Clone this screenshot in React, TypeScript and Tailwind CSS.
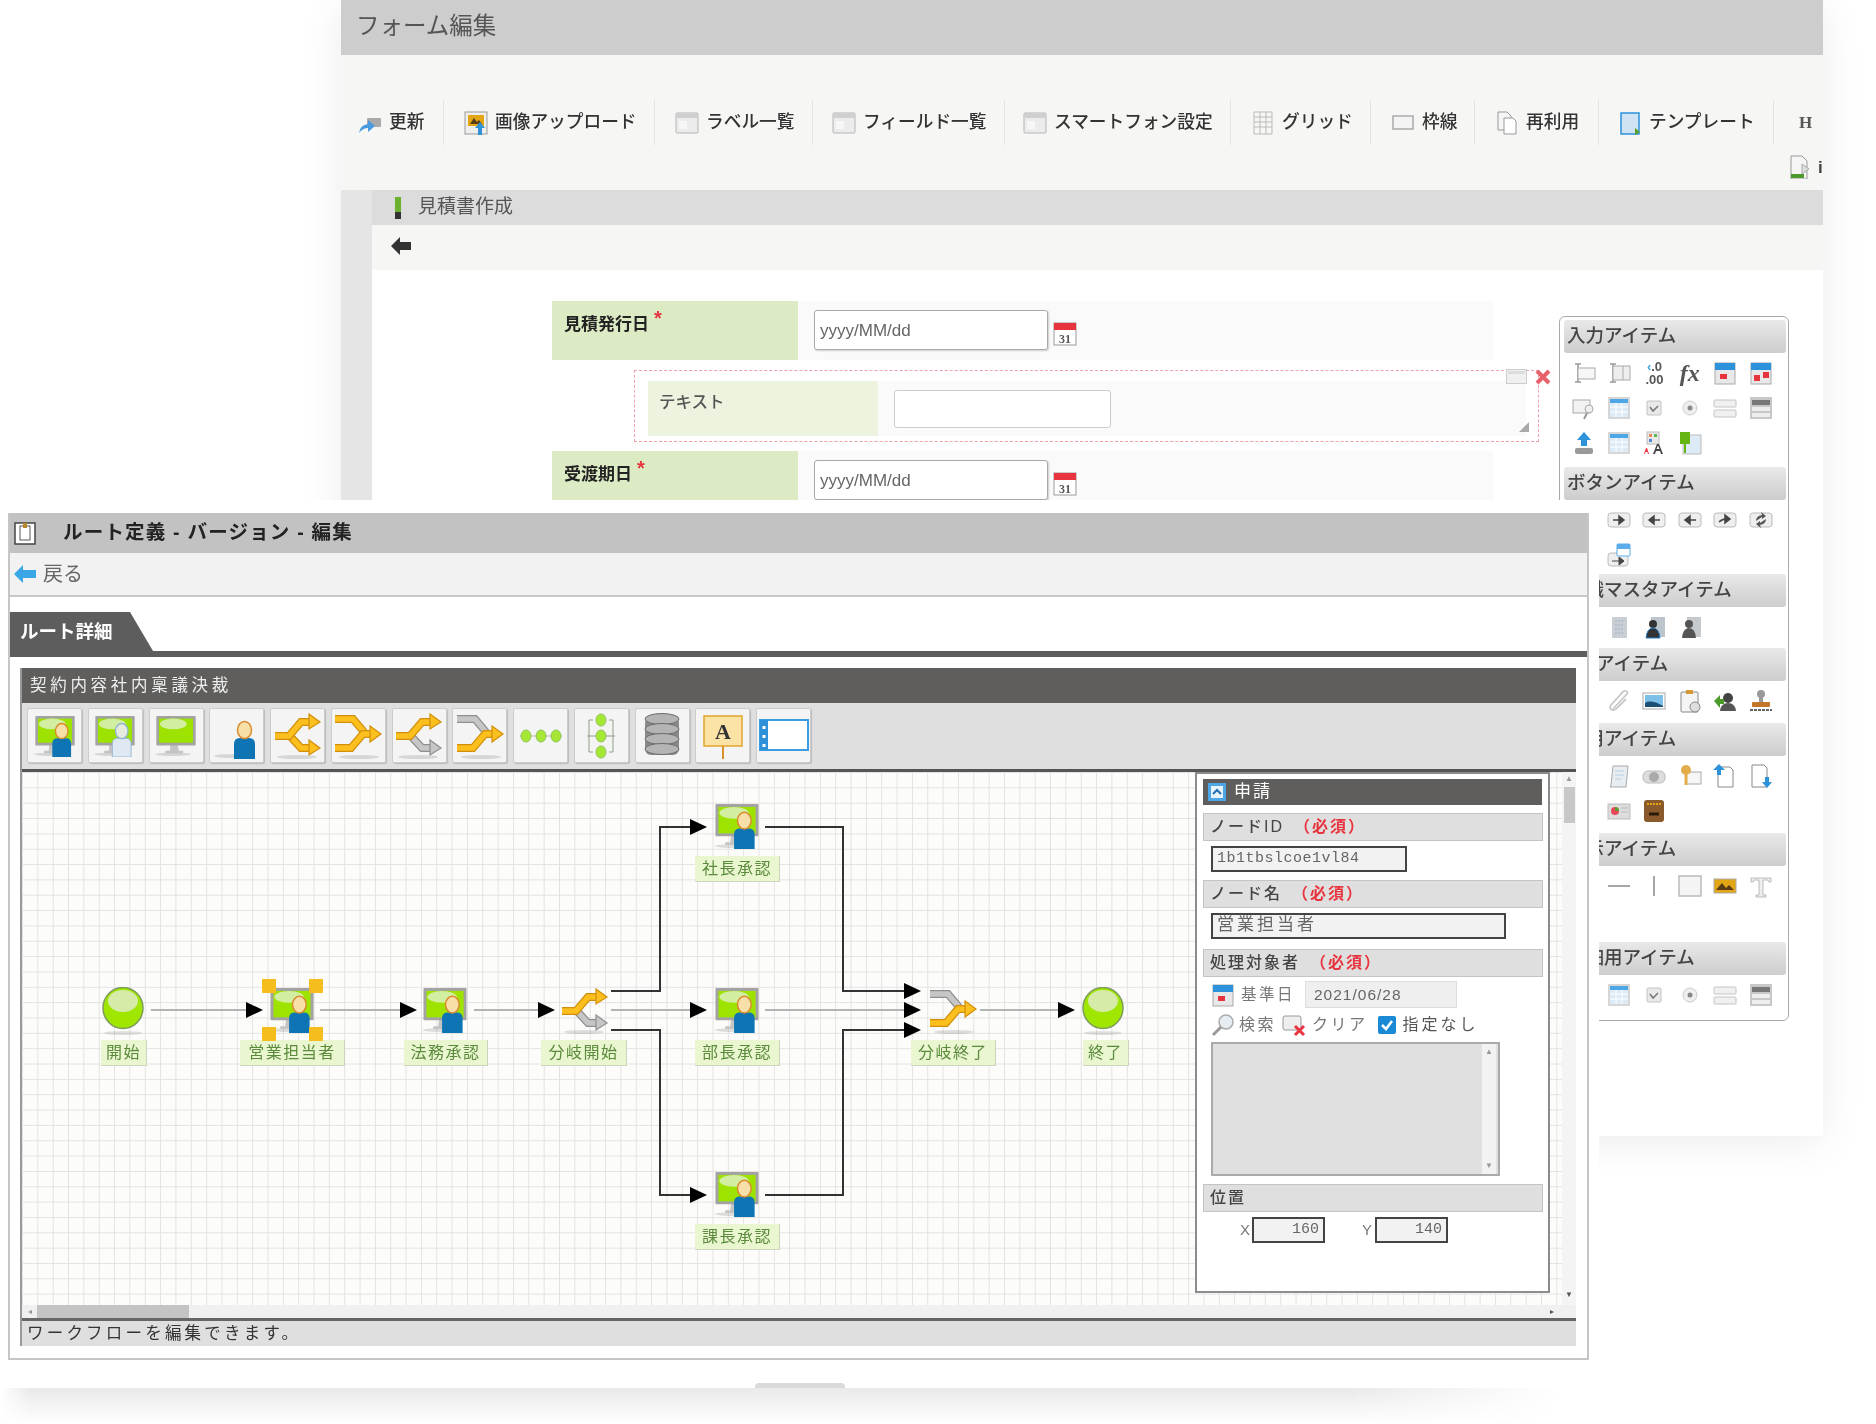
const Shadow = ({ cx, cy, rx }: { cx: number; cy: number; rx: number }) => (
  <ellipse cx={cx} cy={cy} rx={rx} ry="2" fill="#000" opacity="0.12" />
);

// monitor with optional person standing in front of it
function Monitor({ person = "blue", size = 46 }: { person?: "blue" | "ghost" | "none"; size?: number }) {
  return (
    <svg width={size} height={size} viewBox="0 0 46 47">
      <Shadow cx={20} cy={44} rx={20} />
      <path d="M17 32h8l1 8h5v3H11v-3h5z" fill="#c4c4c4" />
      <rect x="1" y="1" width="44" height="33" rx="1" fill="#a3a3a3" />
      <rect x="4" y="4" width="38" height="27" fill="#9ee300" />
      <ellipse cx="20" cy="10" rx="15" ry="6" fill="#d2eea0" />
      {person === "blue" && (
        <>
          <path d="M20 32q0-6 6-6h9q6 0 6 6v15H20z" fill="#0f74b4" />
          <ellipse cx="30.5" cy="18" rx="7" ry="8.5" fill="#f6e0a8" stroke="#d98a2e" strokeWidth="1.5" />
        </>
      )}
      {person === "ghost" && (
        <>
          <path d="M20 32q0-6 6-6h9q6 0 6 6v15H20z" fill="#dfe9f3" stroke="#8fb2d0" />
          <ellipse cx="30.5" cy="18" rx="7" ry="8.5" fill="#e6ecdc" stroke="#8fb2d0" strokeWidth="1.5" />
        </>
      )}
    </svg>
  );
}

function PersonOnly() {
  return (
    <svg width="46" height="47" viewBox="0 0 46 47">
      <Shadow cx={20} cy={44} rx={20} />
      <path d="M20 32q0-6 6-6h9q6 0 6 6v15H20z" fill="#0f74b4" />
      <ellipse cx="30.5" cy="18" rx="7" ry="8.5" fill="#f6e0a8" stroke="#d98a2e" strokeWidth="1.5" />
    </svg>
  );
}

function Pipe({ d, color }: { d: string; color: "orange" | "gray" }) {
  const dark = color === "orange" ? "#d18f0c" : "#8f8f8f";
  const light = color === "orange" ? "#fbbf1e" : "#c6c6c6";
  return (
    <>
      <path d={d} fill="none" stroke={dark} strokeWidth="8" />
      <path d={d} fill="none" stroke={light} strokeWidth="5.5" />
    </>
  );
}

function Head({ points, color }: { points: string; color: "orange" | "gray" }) {
  return (
    <polygon
      points={points}
      fill={color === "orange" ? "#fbbf1e" : "#c6c6c6"}
      stroke={color === "orange" ? "#d18f0c" : "#8f8f8f"}
      strokeWidth="1.2"
    />
  );
}

function Split({ top = "orange", bottom = "gray" }: { top?: "orange" | "gray"; bottom?: "orange" | "gray" }) {
  return (
    <svg width="50" height="47" viewBox="0 0 50 47">
      <Shadow cx={24} cy={45} rx={20} />
      <Pipe d="M16 23L28 36H37" color={bottom} />
      <Head points="36,28 47,36 36,43" color={bottom} />
      <Pipe d="M2 24H16L28 10H37" color={top} />
      <Head points="36,2 47,10 36,17" color={top} />
    </svg>
  );
}

function Merge({ top = "gray", bottom = "orange", bothHeads = false }: { top?: "orange" | "gray"; bottom?: "orange" | "gray"; bothHeads?: boolean }) {
  return (
    <svg width="50" height="47" viewBox="0 0 50 47">
      <Shadow cx={26} cy={45} rx={20} />
      <Pipe d="M2 7H20L31 20" color={top} />
      <Pipe d="M2 36H18L30 22H38" color={bottom} />
      <Head points="37,14 48,22 37,30" color={bothHeads ? top : bottom} />
    </svg>
  );
}

function Ball({ size = 42 }: { size?: number }) {
  return (
    <svg width={size} height={size + 6} viewBox="0 0 42 48">
      <ellipse cx="21" cy="46" rx="19" ry="2" fill="#000" opacity="0.1" />
      <ellipse cx="21" cy="21" rx="20" ry="20.5" fill="#9fe600" stroke="#7f9a5e" strokeWidth="1.5" />
      <ellipse cx="21" cy="14" rx="15" ry="11" fill="#d6eba8" />
    </svg>
  );
}

const toolbarIcons = [
  <Monitor key="a" size={42} />,
  <Monitor key="b" size={42} person="ghost" />,
  <Monitor key="c" size={42} person="none" />,
  <PersonOnly key="d" />,
  <Split key="e" top="orange" bottom="orange" />,
  <Merge key="f" top="orange" bottom="orange" bothHeads />,
  <Split key="g" />,
  <Merge key="h" />,
  <svg key="i" width="46" height="40" viewBox="0 0 46 40">
    <path d="M2 20H44" stroke="#bbb" />
    {[8, 23, 38].map((x) => (
      <ellipse key={x} cx={x} cy="20" rx="5" ry="6" fill="#a6e635" stroke="#8fc45a" />
    ))}
  </svg>,
  <svg key="j" width="30" height="48" viewBox="0 0 30 48">
    <path d="M7 8H3V40H7M23 8H27V40H23M1 24H29" fill="none" stroke="#8fa08a" />
    {[8, 24, 40].map((y) => (
      <ellipse key={y} cx="15" cy={y} rx="5" ry="6" fill="#a6e635" stroke="#8fc45a" />
    ))}
  </svg>,
  <svg key="k" width="38" height="48" viewBox="0 0 38 48">
    <rect x="2" y="5" width="34" height="38" rx="6" fill="#8a8a8a" />
    {[7, 17, 27, 37].map((y) => (
      <ellipse key={y} cx="19" cy={y} rx="17" ry="5.5" fill="#b4b4b4" stroke="#6c6c6c" />
    ))}
  </svg>,
  <svg key="l" width="42" height="48" viewBox="0 0 42 48">
    <rect x="2" y="4" width="38" height="30" fill="#fbe3a6" stroke="#e1a42f" strokeWidth="1.5" />
    <path d="M21 34v13" stroke="#d9922a" strokeWidth="2" />
    <text x="21" y="27" textAnchor="middle" fontSize="22" fontWeight="700" fontFamily="Liberation Serif" fill="#333">A</text>
  </svg>,
  <svg key="m" width="50" height="36" viewBox="0 0 50 36">
    <rect x="1" y="2" width="48" height="30" fill="#fff" stroke="#3d9ce0" strokeWidth="2" />
    <rect x="1" y="2" width="8" height="30" fill="#2f8fd8" />
    {[8, 17, 26].map((y) => (
      <rect key={y} x="3.5" y={y} width="3" height="3" fill="#fff" />
    ))}
  </svg>,
];

const stroke = { fill: "none", stroke: "#999", strokeWidth: 1.5 };

// small icons of the toolbar and the item palette, all on a 24 grid
function Glyph({ name }: { name: string }) {
  const content: Record<string, React.ReactNode> = {
    update: (
      <>
        <rect x="9" y="7" width="14" height="9" rx="1" fill="#aaa" />
        <path d="M1 22q1-8 9-9V9l7 6-7 6v-4q-5 0-9 5z" fill="#4a9ae0" />
      </>
    ),
    upload: (
      <>
        <rect x="1" y="1" width="22" height="22" fill="#eee" stroke="#999" />
        <rect x="4" y="4" width="16" height="11" fill="#e2a515" />
        <path d="M6 13l4-6 3 4 2-2 3 4z" fill="#5a3b14" />
        <path d="M16 11l5 6h-3v7h-4v-7h-3z" fill="#2e92d9" />
      </>
    ),
    sheet: (
      <>
        <rect x="1" y="2" width="22" height="20" rx="1" fill="#ececec" stroke="#b4b4b4" />
        <rect x="2" y="3" width="20" height="4" fill="#cfcfcf" />
        <rect x="4" y="10" width="8" height="8" fill="#f7f7f7" />
      </>
    ),
    grid: <path d="M3 1h18v22H3zM3 6h18M3 11h18M3 16h18M9 1v22M15 1v22" {...stroke} strokeWidth={1} stroke="#bbb" />,
    frame: <rect x="2" y="5" width="20" height="13" fill="#f4f4f4" stroke="#aaa" strokeWidth="1.5" />,
    reuse: (
      <>
        <path d="M3 1h9l4 4v14H3z" fill="#f5f5f5" stroke="#999" />
        <path d="M9 7h9l3 3v13H9z" fill="#fff" stroke="#999" />
      </>
    ),
    template: (
      <>
        <rect x="3" y="2" width="18" height="21" fill="#cfe3f3" stroke="#2d92dc" strokeWidth="1.5" />
        <path d="M17 17l5 4-5 3z" fill="#5aa02c" />
      </>
    ),
    export: (
      <>
        <path d="M3 1h11l5 5v18H3z" fill="#f5f5f5" stroke="#999" />
        <rect x="3" y="19" width="13" height="4" fill="#4d9a2a" />
        <path d="M14 9l7 5-7 5z" fill="#ddd" stroke="#aaa" />
      </>
    ),
    labelField: (
      <>
        <path d="M6 3v18M3 3h6M3 21h6" {...stroke} />
        <rect x="6" y="7" width="17" height="11" fill="#f6f6f6" stroke="#aaa" />
      </>
    ),
    labelField2: (
      <>
        <path d="M6 3v18M3 3h6M3 21h6" {...stroke} />
        <rect x="6" y="5" width="17" height="14" fill="#eee" stroke="#aaa" />
        <path d="M16 5v14" stroke="#aaa" />
      </>
    ),
    calendar: (
      <>
        <rect x="2" y="2" width="20" height="21" fill="#e8e8e8" stroke="#aaa" />
        <rect x="2" y="2" width="20" height="7" fill="#2d92dc" />
        <rect x="7" y="13" width="7" height="5" fill="#e8343e" />
      </>
    ),
    calendar2: (
      <>
        <rect x="2" y="2" width="20" height="21" fill="#e8e8e8" stroke="#aaa" />
        <rect x="2" y="2" width="20" height="7" fill="#2d92dc" />
        <rect x="5" y="14" width="6" height="6" fill="#e8343e" />
        <rect x="14" y="11" width="6" height="6" fill="#e8343e" />
      </>
    ),
    lookup: (
      <>
        <rect x="1" y="4" width="17" height="13" fill="#f2f2f2" stroke="#aaa" />
        <circle cx="17" cy="13" r="4" fill="#eee" stroke="#aaa" />
        <path d="M15 17l-3 6" stroke="#999" strokeWidth="2" />
      </>
    ),
    table: (
      <>
        <rect x="1" y="1" width="22" height="22" fill="#d6d6d6" />
        <rect x="3" y="3" width="18" height="18" fill="#dcebf6" />
        <rect x="3" y="3" width="18" height="4" fill="#4da6e6" />
        <path d="M3 11h18M3 16h18M9 7v14M15 7v14" stroke="#fff" />
      </>
    ),
    check: (
      <>
        <rect x="5" y="5" width="14" height="14" rx="1" fill="#e9e9e9" stroke="#c4c4c4" />
        <path d="M8 11l3 4 5-5" fill="none" stroke="#777" strokeWidth="1.5" />
      </>
    ),
    radio: (
      <>
        <circle cx="12" cy="12" r="7" fill="#eee" stroke="#ccc" />
        <circle cx="12" cy="12" r="2.5" fill="#888" />
      </>
    ),
    list: (
      <>
        <rect x="1" y="4" width="22" height="7" rx="1" fill="#f0f0f0" stroke="#c4c4c4" />
        <rect x="1" y="14" width="22" height="7" rx="1" fill="#f0f0f0" stroke="#c4c4c4" />
      </>
    ),
    listbox: (
      <>
        <rect x="1" y="1" width="22" height="22" fill="#c8c8c8" />
        <rect x="3" y="4" width="18" height="5" fill="#777" />
        <rect x="3" y="11" width="18" height="4" fill="#eee" />
        <rect x="3" y="17" width="18" height="4" fill="#eee" />
      </>
    ),
    uploadItem: (
      <>
        <path d="M12 1l7 8h-4v6H9V9H5z" fill="#2e92d9" />
        <rect x="3" y="17" width="18" height="6" rx="2" fill="#999" />
      </>
    ),
    color: (
      <>
        <rect x="5" y="1" width="12" height="12" fill="#e9e9e9" stroke="#bbb" />
        <rect x="7" y="3" width="3" height="3" fill="#e85" />
        <rect x="12" y="3" width="3" height="3" fill="#5b5" />
        <rect x="7" y="8" width="3" height="3" fill="#58d" />
        <path d="M11 23l4-10h2l4 10h-2l-1-3h-4l-1 3zM14.5 18h3l-1.5-3.5z" fill="#444" />
        <path d="M2 23l2-6h1l2 6H6l-.5-2h-2L3 23z" fill="#e34" />
      </>
    ),
    tag: (
      <>
        <rect x="5" y="4" width="18" height="19" fill="#dcebf6" stroke="#bbb" />
        <rect x="2" y="1" width="10" height="12" fill="#66b512" />
        <path d="M7 13v9" stroke="#66b512" strokeWidth="2" />
      </>
    ),
    btnR: (
      <>
        <rect x="1" y="5" width="22" height="14" rx="3" fill="#eee" stroke="#bbb" />
        <path d="M6 12h7M12 8l5 4-5 4z" stroke="#444" fill="#444" strokeWidth="1.5" />
      </>
    ),
    btnL: (
      <>
        <rect x="1" y="5" width="22" height="14" rx="3" fill="#eee" stroke="#bbb" />
        <path d="M18 12h-7M12 8l-5 4 5 4z" stroke="#444" fill="#444" strokeWidth="1.5" />
      </>
    ),
    btnU: (
      <>
        <rect x="1" y="5" width="22" height="14" rx="3" fill="#eee" stroke="#bbb" />
        <path d="M6 14q3-3 7-3M12 7l5 4-5 4z" stroke="#444" fill="#444" strokeWidth="1.5" />
      </>
    ),
    btnC: (
      <>
        <rect x="1" y="5" width="22" height="14" rx="3" fill="#eee" stroke="#bbb" />
        <path d="M7 13q0-5 6-6l-1-3 5 4-4 3v-2M17 11q0 5-6 6l1 3-5-4 4-3v2" fill="#555" />
      </>
    ),
    btnW: (
      <>
        <rect x="1" y="10" width="20" height="13" rx="3" fill="#eee" stroke="#bbb" />
        <path d="M5 18h8M12 14l5 4-5 4z" stroke="#444" fill="#444" />
        <rect x="10" y="1" width="13" height="12" rx="1" fill="#fff" stroke="#5aade8" />
        <rect x="10" y="1" width="13" height="5" fill="#5aade8" />
      </>
    ),
    building: (
      <>
        <rect x="5" y="2" width="15" height="21" rx="1" fill="#c8ced3" />
        <path d="M8 6h9M8 10h9M8 14h9M8 18h9" stroke="#9fb3c4" strokeDasharray="2 1" />
      </>
    ),
    orgA: (
      <>
        <rect x="9" y="2" width="14" height="20" fill="#bcc5cc" />
        <circle cx="11" cy="9" r="4" fill="#333" />
        <path d="M4 23q1-10 7-10t7 10z" fill="#333" stroke="#2580c8" />
      </>
    ),
    orgB: (
      <>
        <rect x="9" y="2" width="14" height="20" fill="#c6cacd" />
        <circle cx="11" cy="9" r="4" fill="#555" />
        <path d="M4 23q1-10 7-10t7 10z" fill="#555" />
      </>
    ),
    clipper: (
      <path d="M6 20L19 6q3-3 0-4t-5 3L4 16q-2 4 1 5t6-3l8-8" fill="none" stroke="#c8c8c8" strokeWidth="1.8" />
    ),
    image: (
      <>
        <rect x="1" y="4" width="22" height="16" fill="#fff" stroke="#aaa" />
        <rect x="3" y="6" width="18" height="12" fill="#7cc0e8" />
        <path d="M3 14q6-4 18 3v1H3z" fill="#1c4f73" />
      </>
    ),
    clock: (
      <>
        <rect x="3" y="3" width="17" height="20" rx="1" fill="#f4f4f4" stroke="#888" />
        <rect x="8" y="1" width="7" height="4" fill="#d59a35" />
        <circle cx="17" cy="18" r="5" fill="#ddd" stroke="#888" />
      </>
    ),
    back: (
      <>
        <circle cx="15" cy="9" r="5" fill="#444" />
        <path d="M7 22q1-8 8-8t8 8z" fill="#555" />
        <path d="M1 12l6-6v4h4v5H7v4z" fill="#4c9a2a" />
      </>
    ),
    stamp: (
      <>
        <circle cx="12" cy="5" r="4" fill="#999" />
        <rect x="10" y="8" width="4" height="5" fill="#999" />
        <rect x="3" y="13" width="18" height="5" rx="1" fill="#c4772a" />
        <path d="M1 21h22" stroke="#666" strokeWidth="2" strokeDasharray="3 1" />
      </>
    ),
    doc: (
      <>
        <path d="M4 21L6 2h15l-2 21H3z" fill="#e8edf2" stroke="#aaa" />
        <path d="M8 7h9M8 11h9M8 15h6" stroke="#b8cfe2" />
      </>
    ),
    coin: (
      <>
        <rect x="1" y="7" width="22" height="12" rx="5" fill="#ddd" stroke="#bbb" />
        <circle cx="12" cy="13" r="5" fill="#aaa" />
      </>
    ),
    key: (
      <>
        <rect x="8" y="8" width="15" height="12" fill="#f6f6f6" stroke="#aaa" />
        <circle cx="8" cy="6" r="5" fill="#e3ad4c" />
        <path d="M8 10v11" stroke="#e3ad4c" strokeWidth="3" />
      </>
    ),
    docUp: (
      <>
        <path d="M5 3h12l3 3v17H5z" fill="#fff" stroke="#888" />
        <path d="M6 0l6 6H8v5H4V6H0z" fill="#2e92d9" />
      </>
    ),
    docDown: (
      <>
        <path d="M3 1h12l3 3v19H3z" fill="#fff" stroke="#888" />
        <path d="M18 24l-5-6h3v-5h4v5h3z" fill="#2e92d9" />
      </>
    ),
    chart: (
      <>
        <rect x="1" y="5" width="22" height="15" fill="#ddd" stroke="#bbb" />
        <circle cx="8" cy="12" r="4" fill="#e8455a" />
        <path d="M8 12V8a4 4 0 0 1 4 4z" fill="#5aa02c" />
        <path d="M14 9h7M14 13h7" stroke="#bbb" />
      </>
    ),
    box: (
      <>
        <rect x="2" y="1" width="20" height="22" rx="3" fill="#8a5a2c" />
        <path d="M5 5h14" stroke="#e2a515" strokeWidth="2" strokeDasharray="2 1" />
        <path d="M7 15h10" stroke="#2a1a08" strokeWidth="3" />
      </>
    ),
    hline: <path d="M1 12h22" stroke="#888" strokeWidth="1.5" />,
    vline: <path d="M12 2v20" stroke="#888" strokeWidth="1.5" />,
    square: <rect x="1" y="2" width="22" height="20" fill="#f4f4f4" stroke="#bbb" strokeWidth="1.5" />,
    picture: (
      <>
        <rect x="1" y="5" width="22" height="14" fill="#e2a515" stroke="#aaa" />
        <path d="M3 16l6-7 4 5 3-3 5 5z" fill="#5a3b14" />
      </>
    ),
    text: <path d="M2 4h20v4h-2l-1-2h-5v15h3v2H7v-2h3V6H5L4 8H2z" fill="#eee" stroke="#bbb" />,
    blue: <path d="M1 12l9-9v5h13v8H10v5z" fill="#3aa6e6" />,
    clear: (
      <>
        <rect x="1" y="3" width="18" height="14" rx="2" fill="#eee" stroke="#999" />
        <path d="M13 13l9 9M22 13l-9 9" stroke="#e8343e" strokeWidth="3" />
      </>
    ),
    search: (
      <>
        <circle cx="15" cy="9" r="7" fill="#e6eef4" stroke="#aaa" strokeWidth="1.5" />
        <path d="M10 14l-8 8" stroke="#999" strokeWidth="3" />
      </>
    ),
    clipboard: (
      <>
        <rect x="2" y="2" width="20" height="21" fill="#fff" stroke="#444" strokeWidth="1.5" />
        <rect x="7" y="5" width="10" height="14" fill="#fff" stroke="#555" />
        <rect x="10" y="2" width="4" height="5" fill="#b8862c" />
      </>
    ),
    date31: (
      <>
        <rect x="1" y="1" width="22" height="22" fill="#fff" stroke="#999" />
        <rect x="1" y="1" width="22" height="7" fill="#e8343e" />
        <text x="12" y="21" textAnchor="middle" fontSize="12" fontWeight="700" fontFamily="Liberation Serif" fill="#555">31</text>
      </>
    ),
  };
  return (
    <svg width="24" height="24" viewBox="0 0 24 24" className="shrink-0">
      {content[name]}
    </svg>
  );
}

const tools = [
  { icon: "update", label: "更新", cls: "w-[103px] pl-[17px]" },
  { icon: "upload", label: "画像アップロード", cls: "w-[211px] pl-[20px]" },
  { icon: "sheet", label: "ラベル一覧", cls: "w-[158px] pl-[20px]" },
  { icon: "sheet", label: "フィールド一覧", cls: "w-[192px] pl-[19px]" },
  { icon: "sheet", label: "スマートフォン設定", cls: "w-[226px] pl-[18px]" },
  { icon: "grid", label: "グリッド", cls: "w-[140px] pl-[20px]" },
  { icon: "frame", label: "枠線", cls: "w-[104px] pl-[20px]" },
  { icon: "reuse", label: "再利用", cls: "w-[124px] pl-[20px]" },
  { icon: "template", label: "テンプレート", cls: "w-[175px] pl-[19px]" },
];

// the first column of the lower sections lies under the route window, so it stays empty
const sections = [
  { title: "入力アイテム", top: "", icons: ["labelField", "labelField2", "decimal", "fx", "calendar", "calendar2", "lookup", "table", "check", "radio", "list", "listbox", "uploadItem", "table", "color", "tag"], rows: "h-[105px]" },
  { title: "ボタンアイテム", top: "mt-[7px]", icons: ["", "btnR", "btnL", "btnL", "btnU", "btnC", "", "btnW"], rows: "h-[70px]" },
  { title: "組織マスタアイテム", top: "mt-[2px]", icons: ["", "building", "orgA", "orgB"], rows: "h-[35px]" },
  { title: "部品アイテム", top: "mt-[4px]", icons: ["", "clipper", "image", "clock", "back", "stamp"], rows: "h-[35px]", shift: "-ml-[8px]" },
  { title: "専用アイテム", top: "mt-[5px]", icons: ["", "doc", "coin", "key", "docUp", "docDown", "", "chart", "box"], rows: "h-[70px]" },
  { title: "表示アイテム", top: "mt-[5px]", icons: ["", "hline", "vline", "square", "picture", "text"], rows: "h-[70px]" },
  { title: "明細用アイテム", top: "mt-[4px]", icons: ["", "table", "check", "radio", "list", "listbox"], rows: "h-[35px]" },
];

function PaletteIcon({ name }: { name: string }) {
  if (name === "decimal")
    return (
      <span className="flex flex-col items-center text-[13px] leading-[13px] font-bold text-[#555]">
        <span>
          <span className="text-[#3aa6e6]">‹</span>.0
        </span>
        <span>.00</span>
      </span>
    );
  if (name === "fx")
    return <span className="font-['Liberation_Serif'] text-[24px] leading-none font-bold text-[#555] italic">fx</span>;
  return <Glyph name={name} />;
}

function Palette() {
  return (
    <div className="absolute top-[316px] left-[1218px] w-[230px] rounded-md border border-[#aaa] bg-white pt-[3px] pr-[2px] pb-[8px] pl-[4px]">
      {sections.map((s) => (
        <div key={s.title} className={s.top}>
          <div className="h-[33px] overflow-hidden rounded-[3px] bg-linear-to-b from-[#e9e9e9] to-[#cdcdcd] px-[3px] text-[18.5px] leading-[31px] font-medium whitespace-nowrap text-[#444]">
            <div className={s.shift}>{s.title}</div>
          </div>
          <div className={`mt-[2px] ml-[2px] grid auto-rows-[35px] grid-cols-[repeat(6,35.4px)] ${s.rows}`}>
            {s.icons.map((n, i) => (
              <div key={i} className="flex items-center justify-center">
                {n && <PaletteIcon name={n} />}
              </div>
            ))}
          </div>
        </div>
      ))}
    </div>
  );
}

function DateRow({ label, top }: { label: string; top: string }) {
  return (
    <div className={`ml-[180px] flex h-[59px] w-[941px] bg-[#fafafa] ${top}`}>
      <div className="w-[246px] bg-[#dcebc4] pt-[7px] pl-[12px] text-[17px] leading-[25px] font-bold text-[#222]">
        {label}
        <span className="ml-[5px] align-[5px] text-[20px] leading-none text-[#e8343e]">*</span>
      </div>
      <div className="mt-[9px] ml-[16px] flex h-[40px] w-[234px] items-center rounded-[3px] border border-[#aaa] bg-white pt-[1px] pl-[5px] text-[17px] text-[#666] shadow-[1px_1px_2px_#ccc]">
        yyyy/MM/dd
      </div>
      <div className="mt-[21px] ml-[5px]">
        <Glyph name="date31" />
      </div>
    </div>
  );
}

function FormWindow() {
  return (
    <div className="absolute top-0 left-[341px] h-[1136px] w-[1482px] bg-white shadow-[0_6px_40px_rgba(0,0,0,0.08)]">
      <div className="h-[55px] bg-[#cdcdcd] pt-[9px] pl-[15px] text-[23.5px] leading-[34px] text-[#555]">フォーム編集</div>
      <div className="h-[135px] overflow-hidden bg-[#f6f6f4] pt-[45px]">
        <div className="flex h-[45px] items-center">
          {tools.map((t) => (
            <div key={t.label} className={`flex h-full items-center gap-[7px] border-r border-[#e4e4e2] text-[17.7px] font-medium whitespace-nowrap text-[#333] ${t.cls}`}>
              <Glyph name={t.icon} />
              {t.label}
            </div>
          ))}
          <span className="ml-[25px] font-['Liberation_Serif'] text-[17px] font-bold text-[#555]">H</span>
        </div>
        <div className="mt-[10px] flex justify-end gap-[6px] text-[17px] font-bold text-[#444]">
          <Glyph name="export" />
          <span className="w-[5px] overflow-hidden">i</span>
        </div>
      </div>
      <div className="flex">
        <div className="h-[946px] w-[31px] bg-[#e5e5e5]" />
        <div className="min-w-0 flex-1">
          <div className="flex h-[35px] items-center gap-[17px] bg-[#dcdcdc] pl-[23px] text-[19px] text-[#555]">
            <span className="h-[22px] w-[6px] bg-linear-to-b from-[#6cb12d] from-70% to-[#333] to-70%" />
            見積書作成
          </div>
          <div className="flex h-[45px] items-center bg-[#f6f6f4] pb-[4px] pl-[19px]">
            <svg width="20" height="18" viewBox="0 0 20 18">
              <path d="M0 9l9-9v5h11v8H9v5z" fill="#333" />
            </svg>
          </div>
          <DateRow label="見積発行日" top="mt-[31px]" />
          <div className="mt-[10px] ml-[262px] h-[72px] w-[905px] border border-dashed border-[#f0a0a8] py-[10px] pl-[13px]">
            <div className="flex h-[55px] w-[878px] bg-[#fafafa]">
              <div className="w-[230px] bg-[#ecf4e0] pt-[9px] pl-[11px] text-[16.5px] font-medium text-[#555]">テキスト</div>
              <div className="mt-[9px] ml-[16px] h-[38px] w-[217px] rounded-[3px] border border-[#ccc] bg-white" />
            </div>
          </div>
          <DateRow label="受渡期日" top="mt-[9px]" />
        </div>
      </div>
      <div className="absolute top-[369px] left-[1165px]">
        <svg width="21" height="15" viewBox="0 0 21 15">
          <rect x="0.5" y="0.5" width="20" height="14" fill="#f0f0f0" stroke="#ccc" />
          <rect x="2" y="2" width="17" height="3" fill="#ddd" />
        </svg>
      </div>
      <div className="absolute top-[369px] left-[1194px] h-[16px] w-[16px] overflow-hidden">
        <svg width="16" height="16" viewBox="0 0 24 24">
          <path d="M3 3l18 18M21 3L3 21" stroke="#e8606a" strokeWidth="6" />
        </svg>
      </div>
      <svg className="absolute top-[422px] left-[1178px]" width="10" height="10" viewBox="0 0 10 10">
        <path d="M10 0v10H0z" fill="#aaa" />
      </svg>
      <Palette />
    </div>
  );
}

const nodes = [
  { kind: "ball", x: 102, y: 987, label: "開始", lx: 101, lw: 46 },
  { kind: "mon", x: 269, y: 987, label: "営業担当者", lx: 240, lw: 105 },
  { kind: "mon", x: 422, y: 987, label: "法務承認", lx: 404, lw: 84 },
  { kind: "split", x: 560, y: 987, label: "分岐開始", lx: 541, lw: 86 },
  { kind: "mon", x: 714, y: 803, label: "社長承認", lx: 695, lw: 85 },
  { kind: "mon", x: 714, y: 987, label: "部長承認", lx: 695, lw: 85 },
  { kind: "mon", x: 714, y: 1171, label: "課長承認", lx: 695, lw: 85 },
  { kind: "merge", x: 928, y: 987, label: "分岐終了", lx: 911, lw: 85 },
  { kind: "ball", x: 1082, y: 987, label: "終了", lx: 1083, lw: 46 },
];

// edges drawn in page coordinates, the viewBox shifts them onto the canvas
function Edges() {
  const gray = ["M151 1010H246", "M320 1010H400", "M474 1010H538", "M611 1010H690", "M765 1010H906", "M980 1010H1060"];
  const black = ["M611 991H660V827H690", "M611 1030H660V1195H690", "M765 827H843V991H906", "M765 1195H843V1030H906"];
  const heads = [
    [246, 1010], [400, 1010], [538, 1010], [690, 827], [690, 1010], [690, 1195], [904, 991], [904, 1010], [904, 1030], [1058, 1010],
  ];
  return (
    <svg className="absolute inset-0" width="1556" height="533" viewBox="22 772 1556 533">
      {gray.map((d) => (
        <path key={d} d={d} fill="none" stroke="#b4b4b4" strokeWidth="2" />
      ))}
      {black.map((d) => (
        <path key={d} d={d} fill="none" stroke="#333" strokeWidth="2" />
      ))}
      {heads.map(([x, y]) => (
        <polygon key={`${x}-${y}`} points={`${x},${y - 8} ${x + 17},${y} ${x},${y + 8}`} fill="#000" />
      ))}
    </svg>
  );
}

function Node({ n }: { n: (typeof nodes)[number] }) {
  return (
    <>
      <div className="absolute" style={{ left: n.x - 22, top: n.y - 772 }}>
        {n.kind === "ball" && <Ball />}
        {n.kind === "mon" && <Monitor />}
        {n.kind === "split" && <Split />}
        {n.kind === "merge" && <Merge />}
      </div>
      <div
        className="absolute flex h-[26px] items-center justify-center border-r border-b border-[#cdd6bc] bg-[#e9f6cf] text-[16px] tracking-[1.5px] whitespace-nowrap text-[#5b8a3c]"
        style={{ left: n.lx - 22, top: n.y + 53 - 772, width: n.lw }}
      >
        {n.label}
      </div>
    </>
  );
}

const Required = () => <span className="ml-[10px] font-bold text-[#e8343e]">（必須）</span>;

function SectionBar({ children, className }: { children: React.ReactNode; className: string }) {
  return (
    <div className={`h-[28px] border border-[#c4c4c4] bg-[#e0dfdf] pl-[6px] text-[16px] leading-[25px] font-medium tracking-[2px] whitespace-nowrap text-[#444] ${className}`}>
      {children}
    </div>
  );
}

function Field({ className, children }: { className: string; children?: React.ReactNode }) {
  return (
    <div className={`flex h-[26px] items-center border-2 border-[#444] bg-[#f2f2f2] px-[4px] font-['Liberation_Mono','Noto_Sans_CJK_JP'] whitespace-nowrap text-[#666] ${className}`}>
      {children}
    </div>
  );
}

function PropertyPanel() {
  return (
    <div className="absolute top-0 left-[1173px] h-[521px] w-[355px] border-2 border-[#8c8c8c] bg-white px-[6px] pt-[5px]">
      <div className="flex h-[26px] items-center gap-[8px] bg-[#5f5e5d] pl-[5px] text-[17px] tracking-[2px] text-white">
        <svg width="18" height="18" viewBox="0 0 18 18">
          <rect width="18" height="18" fill="#4da6e6" />
          <rect x="3" y="3" width="12" height="12" fill="#e8f2fa" />
          <path d="M5 11l4-4 4 4" fill="none" stroke="#1f6fb2" strokeWidth="2" />
        </svg>
        申請
      </div>
      <SectionBar className="mt-[8px] w-[340px]">
        ノードID<Required />
      </SectionBar>
      <Field className="mt-[5px] ml-[8px] w-[196px] text-[15px] tracking-[0.5px]">1b1tbslcoe1vl84</Field>
      <SectionBar className="mt-[8px] w-[340px]">
        ノード名<Required />
      </SectionBar>
      <Field className="mt-[5px] ml-[8px] w-[295px] text-[17px] tracking-[3px]">営業担当者</Field>
      <SectionBar className="mt-[10px] w-[340px]">
        処理対象者<Required />
      </SectionBar>
      <div className="mt-[4px] ml-[8px] flex h-[27px] items-center gap-[6px] text-[15.5px] tracking-[2.5px] text-[#777]">
        <Glyph name="calendar" />
        <span className="w-[58px] whitespace-nowrap">基準日</span>
        <div className="flex h-[27px] w-[152px] items-center border border-[#ddd] bg-[#efefef] pl-[8px] tracking-[1px] text-[#666]">2021/06/28</div>
      </div>
      <div className="mt-[3px] ml-[8px] flex h-[28px] items-center text-[16px] tracking-[2.5px] whitespace-nowrap text-[#777]">
        <Glyph name="search" />
        <span className="ml-[4px]">検索</span>
        <span className="ml-[6px]">
          <Glyph name="clear" />
        </span>
        <span className="ml-[6px]">クリア</span>
        <span className="ml-[10px] flex h-[18px] w-[18px] items-center justify-center rounded-[2px] bg-[#1a8ad6]">
          <svg width="14" height="14" viewBox="0 0 14 14">
            <path d="M2 7l4 4 6-8" fill="none" stroke="#fff" strokeWidth="2.5" />
          </svg>
        </span>
        <span className="ml-[7px] tracking-[3px] text-[#555]">指定なし</span>
      </div>
      <div className="relative mt-[3px] ml-[8px] flex h-[134px] w-[289px] border-2 border-[#aaa] bg-[#e0e0e0]">
        <div className="absolute top-0 right-[2px] flex h-full w-[14px] flex-col items-center justify-between bg-[#f2f2f2] py-[4px] text-[8px] leading-none text-[#999]">
          <span>▲</span>
          <span>▼</span>
        </div>
      </div>
      <SectionBar className="mt-[8px] w-[340px]">位置</SectionBar>
      <div className="mt-[5px] ml-[37px] flex items-center text-[15px] text-[#777]">
        <span className="w-[12px]">X</span>
        <Field className="w-[73px] justify-end text-[15px]">160</Field>
        <span className="ml-[37px] w-[13px]">Y</span>
        <Field className="w-[73px] justify-end text-[15px]">140</Field>
      </div>
    </div>
  );
}

function RouteWindow() {
  return (
    <div className="absolute top-[513px] left-[8px] h-[847px] w-[1581px] border-x-2 border-b-2 border-[#c6c6c6] bg-white">
      <div className="flex h-[40px] items-center gap-[26px] bg-[#c2c2c2] pl-[3px] text-[19.5px] font-bold tracking-[1.2px] whitespace-nowrap text-[#222]">
        <Glyph name="clipboard" />
        ルート定義 - バージョン - 編集
      </div>
      <div className="flex h-[44px] items-center gap-[6px] border-b-2 border-[#c8c8c8] bg-[#f2f2f2] pl-[3px] text-[20px] text-[#666]">
        <Glyph name="blue" />
        戻る
      </div>
      <div className="mt-[15px] flex h-[39px] w-[143px] items-center bg-[#5d5d5d] pl-[10px] text-[18.5px] font-bold text-white [clip-path:polygon(0_0,120px_0,143px_100%,0_100%)]">
        ルート詳細
      </div>
      <div className="h-[6px] bg-[#5d5d5d]" />
      <div className="mt-[11px] ml-[10px] w-[1556px] border-l-2 border-[#999]">
        <div className="flex h-[35px] items-center bg-[#5f5e5d] pl-[8px] text-[16.5px] tracking-[3.7px] text-[#eee]">契約内容社内稟議決裁</div>
        <div className="flex h-[66px] gap-[5.75px] bg-[#e0dfdf] pt-[5px] pl-[5px]">
          {toolbarIcons.map((icon, i) => (
            <div key={i} className="flex h-[55px] w-[55px] items-center justify-center rounded-[2px] border border-[#ccc] bg-[#f4f4f4] shadow-[1px_1px_1px_#bbb]">
              {icon}
            </div>
          ))}
        </div>
        <div className="h-[3px] bg-[#555]" />
        <div className="relative h-[533px] bg-[#fcfdfb] bg-[linear-gradient(#e4e1e1_1px,transparent_1px),linear-gradient(90deg,#e4e1e1_1px,transparent_1px)] bg-[size:15.35px_15.35px]">
          <Edges />
          {nodes.map((n) => (
            <Node key={n.label} n={n} />
          ))}
          {[[262, 979], [309, 979], [262, 1027], [309, 1027]].map(([x, y]) => (
            <div key={`${x}-${y}`} className="absolute h-[14px] w-[14px] bg-[#f5bd1e]" style={{ left: x - 22, top: y - 772 }} />
          ))}
          <PropertyPanel />
          <div className="absolute top-0 right-0 flex h-full w-[14px] flex-col items-center bg-[#f4f4f4] pt-[3px] text-[8px] leading-none text-[#999]">
            <span>▲</span>
            <div className="mt-[4px] h-[36px] w-[11px] bg-[#c8c8c8]" />
            <span className="mt-auto mb-[6px] text-[#555]">▼</span>
          </div>
        </div>
        <div className="flex h-[13px] items-center bg-[#f0f0f0] text-[8px] text-[#999]">
          <span className="w-[15px] pl-[6px]">◂</span>
          <div className="h-full w-[152px] bg-[#c4c4c4]" />
          <span className="mr-[22px] ml-auto text-[#555]">▸</span>
        </div>
        <div className="h-[3px] bg-[#666]" />
        <div className="flex h-[25px] items-center bg-[#e0dfdf] pl-[5px] text-[16.5px] tracking-[3.2px] text-[#333]">ワークフローを編集できます。</div>
      </div>
    </div>
  );
}

export default function App() {
  return (
    <div className="relative h-[1424px] w-[1876px] overflow-hidden bg-white font-[family-name:'Liberation_Sans','Noto_Sans_CJK_JP',sans-serif] blur-[0.6px]">
      <FormWindow />
      <div className="absolute top-[500px] left-0 h-[888px] w-[1599px] bg-white" />
      <div className="absolute top-[1388px] left-0 h-[36px] w-[1560px] bg-linear-to-b from-[#e9e9e9] to-white [mask-image:linear-gradient(90deg,transparent,#000_30px,#000_1350px,transparent)]" />
      <div className="absolute top-[1383px] left-[755px] h-[5px] w-[90px] rounded-t-[4px] bg-[#dadada]" />
      <RouteWindow />
    </div>
  );
}
